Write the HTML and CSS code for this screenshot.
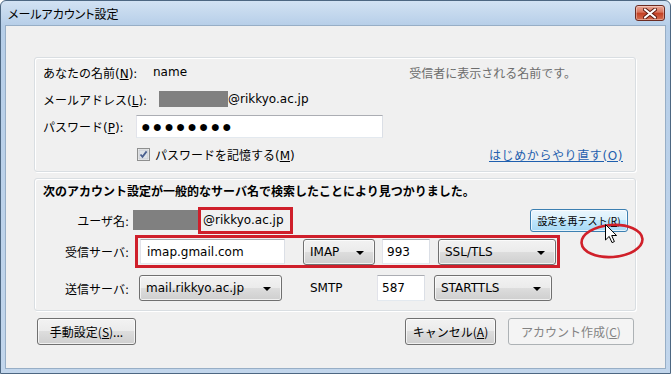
FILE: index.html
```html
<!DOCTYPE html>
<html lang="ja">

<head>
    <meta charset="utf-8">
    <title>メールアカウント設定</title>

    <link rel="stylesheet" href="styles.css">

</head>

<body>

    <div class="window">

        <div class="titlebar">
            <span class="title">メールアカウント設定</span>
            <button class="close">
                <svg width="14" height="11" viewBox="0 0 14 11">
                    <path d="M2 1.5 L12 9.5 M12 1.5 L2 9.5" stroke="#5a1a10" stroke-width="4" stroke-linecap="round" />
                    <path d="M2 1.5 L12 9.5 M12 1.5 L2 9.5" stroke="#fff" stroke-width="2.2" stroke-linecap="round" />
                </svg>
            </button>
        </div>

        <div class="content">

            <div class="group identity">
                <div class="row">
                    <span class="label name-label">あなたの名前(<u>N</u>):</span>
                    <span>name</span>
                    <span class="hint">受信者に表示される名前です。</span>
                </div>
                <div class="row">
                    <span class="label mail-label">メールアドレス(<u>L</u>):</span>
                    <span class="masked"></span>
                    <span>@rikkyo.ac.jp</span>
                </div>
                <div class="row">
                    <span class="label pass-label">パスワード(<u>P</u>):</span>
                    <div class="field password">●●●●●●●●</div>
                </div>
                <div class="row remember">
                    <svg class="check" width="13" height="13" viewBox="0 0 13 13">
                        <rect x="0.5" y="0.5" width="12" height="12" fill="#f4f4f4" stroke="#8e8f8f" />
                        <rect x="2" y="2" width="9" height="9" fill="#dfe3e8" stroke="#c2c6cc" stroke-width="0.8" />
                        <path d="M3.5 6.5 L5.5 8.8 L9.6 3.4" fill="none" stroke="#4a5f8f" stroke-width="1.8" />
                    </svg>
                    <span>パスワードを記憶する(<u>M</u>)</span>
                    <a class="restart" href="#">はじめからやり直す(O)</a>
                </div>
            </div>

            <div class="group found">
                <div class="row notice">次のアカウント設定が一般的なサーバ名で検索したことにより見つかりました。</div>

                <div class="row user">
                    <span class="label">ユーザ名:</span>
                    <span class="masked"></span>
                    <span class="mark user-mark">@rikkyo.ac.jp</span>
                    <button class="btn hover retest">設定を再テスト(<u>R</u>)</button>
                </div>

                <div class="row incoming">
                    <span class="label">受信サーバ:</span>
                    <div class="mark server-mark">
                        <input class="field host" type="text" value="imap.gmail.com">
                        <div class="combo proto">IMAP</div>
                        <input class="field port" type="text" value="993">
                        <div class="combo secure">SSL/TLS</div>
                    </div>
                </div>

                <div class="row outgoing">
                    <span class="label">送信サーバ:</span>
                    <div class="combo smtp-host">mail.rikkyo.ac.jp</div>
                    <span class="smtp">SMTP</span>
                    <input class="field port" type="text" value="587">
                    <div class="combo secure">STARTTLS</div>
                </div>
            </div>

            <div class="actions">
                <button class="btn manual">手動設定(<u>S</u>)...</button>
                <button class="btn cancel">キャンセル(<u>A</u>)</button>
                <button class="btn create" disabled>アカウント作成(<u>C</u>)</button>
            </div>

        </div>

        <!-- 注記: 赤丸とマウスカーソル -->
        <svg class="circle" width="66" height="38" viewBox="0 0 66 38">
            <ellipse cx="33" cy="19" rx="30.5" ry="16" fill="none" stroke="#d0202a" stroke-width="2.6" transform="rotate(-4 33 19)" />
        </svg>
        <svg class="cursor" width="13" height="20" viewBox="0 0 13 20">
            <path d="M0.5 0.5 L0.5 16 L4.2 12.4 L7 18.6 L9.4 17.6 L6.7 11.5 L11.6 11.5 Z" fill="#fff" stroke="#000" stroke-width="1" />
        </svg>

    </div>

</body>

</html>
```

FILE: styles.css
```css
* {
    box-sizing: border-box;
}

body {
    margin: 0;
    font-family: "DejaVu Sans", "Noto Sans CJK JP", sans-serif;
    font-size: 12px;
    color: #000;
}

.window {
    position: relative;
    width: 671px;
    height: 374px;
    display: flex;
    flex-direction: column;
    padding: 0 4px 4px;
    border: 1px solid #4d6782;
    border-radius: 6px 6px 0 0;
    background: linear-gradient(#d2e2f3 0, #b6cee8 25px, #c2d6ec 100%);
}

.titlebar {
    height: 24px;
    display: flex;
    align-items: center;
    justify-content: space-between;
    padding: 0 1px 0 3px;
}

.title {
    font-family: "Noto Sans CJK JP", sans-serif;
    font-feature-settings: "palt";
    font-size: 12px;
}

.close {
    width: 30px;
    height: 16px;
    padding: 0;
    display: flex;
    align-items: center;
    justify-content: center;
    border: 1px solid #6b2b22;
    border-radius: 3px;
    background: linear-gradient(#eaa898 0%, #d8735b 45%, #c33f22 50%, #d46d50 100%);
    box-shadow: inset 0 0 0 1px rgba(255, 255, 255, 0.35);
}

.content {
    flex: 1;
    background: #f0f0f0;
    border: 1px solid #97aec6;
    padding: 31px 29px 0 28px;
}

.group {
    border: 1px solid #d9dee2;
    border-radius: 3px;
    box-shadow: inset 1px 1px 0 #fff, 1px 1px 0 #fff;
    display: flex;
    flex-direction: column;
    padding: 3px 7px 6px 8px;
}

.row {
    display: flex;
    align-items: center;
    white-space: nowrap;
}

.identity {
    gap: 5px;
}

.identity .row {
    height: 22px;
}

.identity .row:nth-child(3) {
    height: 23px;
}

.name-label {
    width: 110px;
}

.mail-label {
    width: 116px;
}

.pass-label {
    width: 93px;
}

.hint {
    margin-left: auto;
    margin-right: 52px;
    color: #6d6d6d;
    font-family: "Noto Sans CJK JP", sans-serif;
}

.masked {
    display: inline-block;
    width: 69px;
    height: 16px;
    background: #808080;
}

.field {
    height: 23px;
    border: 1px solid;
    border-color: #abadb3 #dbdfe6 #e3e9ef #e2e3ea;
    background: #fff;
    font: inherit;
    font-size: 12px;
    padding: 0 5px;
    outline: none;
}

.password {
    width: 247px;
    display: flex;
    align-items: center;
    font-family: "Liberation Sans", sans-serif;
    font-size: 16px;
    letter-spacing: 1.9px;
    padding-left: 4px;
}

.remember {
    padding-left: 94px;
}

.check {
    margin-right: 5px;
}

.restart {
    margin-left: auto;
    margin-right: 5px;
    color: #1f5fae;
    letter-spacing: 0.6px;
}

.found {
    margin-top: 6px;
    padding: 1px 7px 7px 8px;
}

.notice {
    height: 20px;
    font-weight: bold;
    font-family: "Noto Sans CJK JP", sans-serif;
}

.found .label {
    width: 86px;
    text-align: right;
}

.user {
    height: 28px;
    margin-top: 6px;
}

.user .masked {
    margin-left: 4px;
    width: 67px;
    height: 20px;
}

.mark {
    border: 3px solid #cf1f2b;
}

.user-mark {
    margin-left: -2px;
    width: 95px;
    height: 27px;
    display: flex;
    align-items: center;
    padding-left: 2px;
    background: #f0f0f0;
}

.btn {
    height: 27px;
    padding: 0 6px;
    font-family: "Noto Sans CJK JP", sans-serif;
    font-size: 12px;
    color: #000;
    border: 1px solid #707070;
    border-radius: 3px;
    background: linear-gradient(#f2f2f2 0%, #ebebeb 50%, #dddddd 50%, #cfcfcf 100%);
    box-shadow: inset 0 0 0 1px rgba(255, 255, 255, 0.7);
}

.btn.hover {
    border-color: #3c7fb1;
    background: linear-gradient(#eaf6fd 0%, #d9f0fc 50%, #bee6fd 50%, #a7d9f5 100%);
}

.retest {
    margin-left: auto;
    width: 98px;
    height: 23px;
    font-size: 10px;
    padding: 0;
}

.incoming {
    height: 33px;
    margin-top: 1px;
}

.server-mark {
    margin-left: 6px;
    width: 425px;
    height: 33px;
    display: flex;
    align-items: center;
    padding: 0 1px 0 2px;
}

.host {
    width: 145px;
    height: 25px;
    padding-left: 6px;
}

.combo {
    position: relative;
    height: 26px;
    display: flex;
    align-items: center;
    padding-left: 6px;
    border: 1px solid #707070;
    border-radius: 3px;
    background: linear-gradient(#f2f2f2 0%, #ebebeb 50%, #dddddd 50%, #cfcfcf 100%);
    box-shadow: inset 0 0 0 1px rgba(255, 255, 255, 0.7);
}

.combo::after {
    content: "";
    position: absolute;
    right: 10px;
    top: 11px;
    border-left: 4px solid transparent;
    border-right: 4px solid transparent;
    border-top: 4px solid #000;
}

.proto {
    margin-left: 18px;
    width: 72px;
}

.port {
    width: 48px;
    height: 25px;
    padding-left: 4px;
}

.server-mark .port {
    margin-left: 7px;
}

.secure {
    margin-left: 8px;
    width: 118px;
}

.outgoing {
    height: 30px;
    margin-top: 5px;
}

.smtp-host {
    margin-left: 10px;
    width: 143px;
}

.smtp {
    margin-left: 28px;
    width: 67px;
}

.outgoing .port {
    height: 26px;
}

.outgoing .secure {
    margin-left: 9px;
}

.actions {
    display: flex;
    margin-top: 7px;
    padding-left: 3px;
    padding-right: 2px;
}

.manual {
    width: 99px;
}

.cancel {
    margin-left: auto;
    width: 91px;
}

.create {
    margin-left: 12px;
    width: 126px;
    color: #838383;
    border-color: #adb2b5;
    background: #f4f4f4;
    box-shadow: none;
}

.circle {
    position: absolute;
    left: 578px;
    top: 221px;
}

.cursor {
    position: absolute;
    left: 604px;
    top: 223px;
}
```
